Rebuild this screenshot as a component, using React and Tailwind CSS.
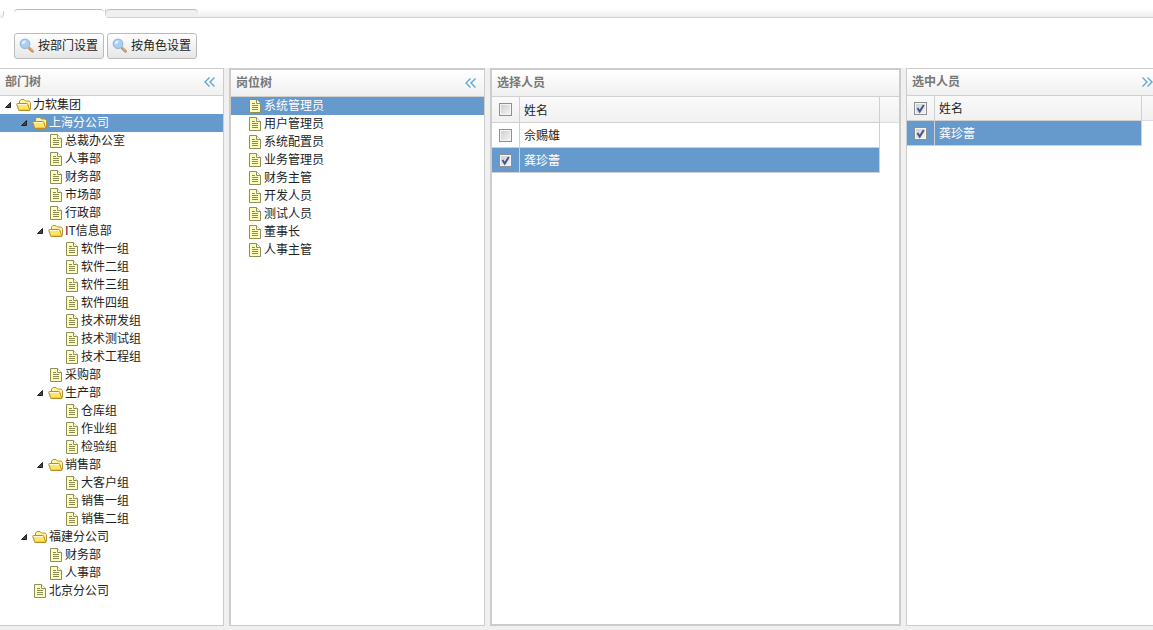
import { useState } from 'react'

const departments = [
  { name: '力软集团', level: 0, folder: true },
  { name: '上海分公司', level: 1, folder: true },
  { name: '总裁办公室', level: 2 },
  { name: '人事部', level: 2 },
  { name: '财务部', level: 2 },
  { name: '市场部', level: 2 },
  { name: '行政部', level: 2 },
  { name: 'IT信息部', level: 2, folder: true },
  { name: '软件一组', level: 3 },
  { name: '软件二组', level: 3 },
  { name: '软件三组', level: 3 },
  { name: '软件四组', level: 3 },
  { name: '技术研发组', level: 3 },
  { name: '技术测试组', level: 3 },
  { name: '技术工程组', level: 3 },
  { name: '采购部', level: 2 },
  { name: '生产部', level: 2, folder: true },
  { name: '仓库组', level: 3 },
  { name: '作业组', level: 3 },
  { name: '检验组', level: 3 },
  { name: '销售部', level: 2, folder: true },
  { name: '大客户组', level: 3 },
  { name: '销售一组', level: 3 },
  { name: '销售二组', level: 3 },
  { name: '福建分公司', level: 1, folder: true },
  { name: '财务部', level: 2 },
  { name: '人事部', level: 2 },
  { name: '北京分公司', level: 1 },
]

const posts = [
  '系统管理员',
  '用户管理员',
  '系统配置员',
  '业务管理员',
  '财务主管',
  '开发人员',
  '测试人员',
  '董事长',
  '人事主管',
].map((name) => ({ name, level: 0 }))

const indents = ['pl-0', 'pl-4', 'pl-8', 'pl-12']

function SearchIcon() {
  return (
    <svg className="size-4 shrink-0" viewBox="0 0 16 16" aria-hidden="true">
      <path d="M10.300 10.300l3.200 3" stroke="#c4895a" strokeWidth="2.800" strokeLinecap="round" />
      <path d="M10.500 10l3 2.800" stroke="#efc496" strokeWidth="1" strokeLinecap="round" />
      <circle cx="6" cy="5.800" r="4.700" fill="#a9d0f3" stroke="#9db9dc" strokeWidth="1.400" />
      <path d="M2.800 6a3.200 3.200 0 013.600-3.400C6.800 4.800 5.200 6.200 2.800 6z" fill="#e2f2ff" />
    </svg>
  )
}

function FolderIcon() {
  return (
    <svg className="h-4 w-4 shrink-0" viewBox="0 0 16 16" aria-hidden="true">
      <path d="M3.500 13V4l1.500-1.500h3L9.500 4H13l1.500 1.500V12L13 13.500z" fill="#fff2a0" stroke="#b4933a" />
      <path d="M3 13.500L.8 7.600Q.5 6.500 1.600 6.500h9q1 0 1.300.9l1.900 6.100z" fill="#ffe566" stroke="#b98f22" />
      <path d="M2 7.500h9" stroke="#fffbd6" />
      <path d="M3.500 12.500h9" stroke="#f6c92f" />
    </svg>
  )
}

function FileIcon() {
  return (
    <svg className="h-4 w-4 shrink-0" viewBox="0 0 16 16" aria-hidden="true">
      <path d="M2.500 1.500h7l4 4v9h-11z" fill="#fdfdc0" stroke="#8f8f5a" />
      <path d="M9.500 1.500v4h4" fill="#fff" stroke="#8f8f5a" />
      <path d="M5 5.500h3M5 7.500h6M5 9.500h6M5 11.500h6" stroke="#8a8a52" />
    </svg>
  )
}

function Chevrons({ right }) {
  return (
    <svg className="h-3 w-3" viewBox="0 0 12 12" fill="none" stroke="#62a8d6" strokeWidth="1.400" aria-hidden="true">
      {right ? (
        <path d="M1.500 1.500L6 6l-4.500 4.500M6.500 1.500L11 6l-4.500 4.500" />
      ) : (
        <path d="M5.500 1.500L1 6l4.500 4.500M10.500 1.500L6 6l4.500 4.500" />
      )}
    </svg>
  )
}

function PanelHeader({ title, arrow }) {
  return (
    <header className="flex h-[27px] items-center justify-between border-b border-[#d0d0d0] bg-linear-to-b from-white to-[#f0f0f0] pl-[5px]">
      <h2 className="pb-0.5 font-bold text-[#777]">{title}</h2>
      {arrow && (
        <button type="button" aria-label={title} className={arrow === 'right' ? '' : 'pr-[7px]'}>
          <Chevrons right={arrow === 'right'} />
        </button>
      )}
    </header>
  )
}

function Tree({ nodes, selected, onSelect }) {
  return (
    <ul>
      {nodes.map((node, i) => (
        <li key={i}>
          <button
            type="button"
            onClick={() => onSelect(i)}
            className={`flex h-[18px] w-full items-center ${indents[node.level]} ${i === selected ? 'bg-[#6699cc] text-white' : ''}`}
          >
            <span className="flex w-4 shrink-0 justify-center">
              {node.folder && (
                <svg className="h-2 w-2" viewBox="0 0 8 8" aria-hidden="true">
                  <path d="M6.500 1.500v5h-5z" fill="#444" stroke="#222" strokeLinejoin="round" />
                </svg>
              )}
            </span>
            {node.folder ? <FolderIcon /> : <FileIcon />}
            <span className="pb-0.5 pl-px">{node.name}</span>
          </button>
        </li>
      ))}
    </ul>
  )
}

function CheckBox({ label, checked, onChange }) {
  return (
    <span className="relative mx-auto block size-[13px]">
      <input
        type="checkbox"
        aria-label={label}
        checked={checked}
        onChange={onChange}
        className="block size-[13px] appearance-none border border-[#8e8f8f] bg-linear-to-br from-[#c9cdd2] to-[#f6f6f6] shadow-[inset_0_0_0_1px_#f4f4f4]"
      />
      {checked && (
        <svg className="pointer-events-none absolute inset-0 size-[13px]" viewBox="0 0 13 13" fill="none" aria-hidden="true">
          <path d="M3.500 6l2.200 3.500L9.800 3" stroke="#45558c" strokeWidth="2" />
        </svg>
      )}
    </span>
  )
}

function PeopleTable({ people, allChecked, gutter, headHeight }) {
  const [checked, setChecked] = useState(people.map((p) => p.checked))
  const [all, setAll] = useState(allChecked)

  const toggleAll = () => {
    setAll(!all)
    setChecked(checked.map(() => !all))
  }

  return (
    <table className="w-full table-fixed border-separate border-spacing-0">
      <colgroup>
        <col className="w-7" />
        <col />
        <col className={gutter} />
      </colgroup>
      <thead>
        <tr className={`bg-linear-to-b from-[#fafafa] to-[#f0f0f0] ${headHeight}`}>
          <th className="border-r border-b border-[#d0d0d0] p-0">
            <CheckBox label="全选" checked={all} onChange={toggleAll} />
          </th>
          <th className="border-r border-b border-[#d0d0d0] p-0 pl-1 text-left font-normal">姓名</th>
          <th className="border-b border-[#ddd] p-0"></th>
        </tr>
      </thead>
      <tbody>
        {people.map((p, i) => (
          <tr key={p.name} className={`h-[25px] ${checked[i] ? 'text-white' : ''}`}>
            <td className={`border-r border-b border-[#d0d0d0] p-0 ${checked[i] ? 'bg-[#6699cc]' : ''}`}>
              <CheckBox
                label={p.name}
                checked={checked[i]}
                onChange={() => setChecked(checked.map((c, n) => (n === i ? !c : c)))}
              />
            </td>
            <td className={`border-r border-b border-[#d0d0d0] p-0 pl-1 ${checked[i] ? 'bg-[#6699cc]' : ''}`}>{p.name}</td>
            <td className="p-0"></td>
          </tr>
        ))}
      </tbody>
    </table>
  )
}

function ToolButton({ children }) {
  return (
    <button
      type="button"
      className="flex h-[26px] items-center gap-[3px] rounded-[3px] border border-[#bbb] bg-linear-to-b from-white to-[#e6e6e6] pr-[5px] pl-1"
    >
      <SearchIcon />
      <span className="pb-0.5">{children}</span>
    </button>
  )
}

export default function App() {
  const [dept, setDept] = useState(1)
  const [post, setPost] = useState(0)

  return (
    <div className="flex min-h-screen flex-col bg-white font-['Noto_Sans_CJK_SC',sans-serif] text-xs leading-[18px] text-[#222]">
      {/* Tab strip */}
      <nav className="flex h-[18px] items-end pt-[9px]">
        <span className="h-[7px] w-1 rounded-br-sm border-r border-[#ccc] bg-linear-to-b from-white to-[#eee]" />
        <span className="ml-2.5 h-[9px] w-[90px] rounded-t-sm border-t border-[#bbb]" />
        <span className="ml-px flex h-[9px] flex-1 rounded-bl-sm border-b border-l border-[#d0d0d0] bg-linear-to-b from-white to-[#eee]">
          <span className="h-full w-[92px] rounded-t-sm border-t border-[#bbb] bg-[#f0f0f0]" />
        </span>
      </nav>

      {/* Toolbar */}
      <div className="flex gap-[3px] pt-[15px] pb-[9px] pl-3.5">
        <ToolButton>按部门设置</ToolButton>
        <ToolButton>按角色设置</ToolButton>
      </div>

      <main className="grid flex-1 grid-cols-[224px_256px_411fr_247fr] gap-[5px] bg-[#f0f0f0] pb-1">
        <section className="border-y border-r border-[#ccc] bg-white">
          <PanelHeader title="部门树" arrow="left" />
          <Tree nodes={departments} selected={dept} onSelect={setDept} />
        </section>
        <section className="border border-t-2 border-l-2 border-[#ccc] bg-white">
          <PanelHeader title="岗位树" arrow="left" />
          <Tree nodes={posts} selected={post} onSelect={setPost} />
        </section>
        <section className="border-2 border-[#ccc] bg-white">
          <PanelHeader title="选择人员" />
          <PeopleTable
            people={[
              { name: '佘赐雄', checked: false },
              { name: '龚珍蕾', checked: true },
            ]}
            allChecked={false}
            gutter="w-[19px]"
            headHeight="h-[26px]"
          />
        </section>
        <section className="border-y border-l border-[#ccc] bg-white">
          <PanelHeader title="选中人员" arrow="right" />
          <PeopleTable
            people={[{ name: '龚珍蕾', checked: true }]}
            allChecked
            gutter="w-[11px]"
            headHeight="h-[25px]"
          />
        </section>
      </main>
    </div>
  )
}
